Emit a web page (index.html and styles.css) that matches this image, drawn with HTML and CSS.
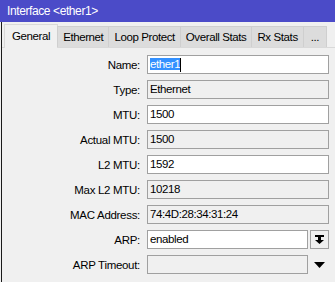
FILE: index.html
```html
<!DOCTYPE html>
<html lang="en">
<head>
    <meta charset="UTF-8">
    <title>Interface &lt;ether1&gt;</title>
    <link rel="stylesheet" href="styles.css">
</head>
<body>
    <div class="window">
        <div class="titlebar">Interface &lt;ether1&gt;</div>
        <div class="frame">
            <div class="tabs">
                <div class="tab active">General</div>
                <div class="tab">Ethernet</div>
                <div class="tab">Loop Protect</div>
                <div class="tab">Overall Stats</div>
                <div class="tab">Rx Stats</div>
                <div class="tab more">...</div>
            </div>
            <div class="panel">
                <div class="row">
                    <label>Name:</label>
                    <div class="field edit"><span class="sel">ether1</span><span class="caret"></span></div>
                </div>
                <div class="row">
                    <label>Type:</label>
                    <div class="field">Ethernet</div>
                </div>
                <div class="row">
                    <label>MTU:</label>
                    <div class="field edit">1500</div>
                </div>
                <div class="row">
                    <label>Actual MTU:</label>
                    <div class="field">1500</div>
                </div>
                <div class="row">
                    <label>L2 MTU:</label>
                    <div class="field edit">1592</div>
                </div>
                <div class="row">
                    <label>Max L2 MTU:</label>
                    <div class="field">10218</div>
                </div>
                <div class="row">
                    <label>MAC Address:</label>
                    <div class="field">74:4D:28:34:31:24</div>
                </div>
                <div class="row">
                    <label>ARP:</label>
                    <div class="combo">
                        <div class="field edit">enabled</div>
                        <div class="dropbtn">
                            <svg width="9" height="9" viewBox="0 0 9 9"><rect x="0" y="0" width="9" height="2" fill="#000"/><rect x="3" y="2" width="3" height="3" fill="#000"/><polygon points="0,5 9,5 4.5,9" fill="#000"/></svg>
                        </div>
                    </div>
                </div>
                <div class="row">
                    <label>ARP Timeout:</label>
                    <div class="combo">
                        <div class="field"></div>
                        <div class="droparrow">
                            <svg width="11" height="6" viewBox="0 0 11 6"><polygon points="0,0 11,0 5.5,6" fill="#000"/></svg>
                        </div>
                    </div>
                </div>
            </div>
        </div>
    </div>
</body>
</html>
```

FILE: styles.css
```css
body {
    margin: 0;
    font-family: "Liberation Sans", Arial, sans-serif;
    font-size: 11px;
    background: #ffffff;
}

.window {
    width: 335px;
    height: 282px;
    overflow: hidden;
    background: #f0f0f0;
}

.titlebar {
    height: 22px;
    line-height: 22px;
    padding-left: 7px;
    background: #4b4bc8;
    color: #ffffff;
    font-size: 12px;
    letter-spacing: -0.4px;
}

.frame {
    margin-left: 1px;
    border-left: 1px solid #1a1a1a;
    height: 260px;
    padding-top: 2px;
    box-sizing: border-box;
}

.tabs {
    display: flex;
    align-items: flex-end;
    height: 23px;
    padding-left: 2px;
    border-bottom: 1px solid #d9d9d9;
}

.tab {
    height: 20px;
    line-height: 20px;
    padding: 0 5px;
    background: #dcdcdc;
    border: 1px solid #cfcfcf;
    border-bottom: none;
    margin-right: -1px;
    font-size: 11.5px;
    letter-spacing: -0.4px;
    color: #000;
}

.tab.active {
    height: 23px;
    line-height: 22px;
    padding: 0 7px;
    background: #f0f0f0;
    border-color: #d9d9d9;
    margin-bottom: -1px;
}

.tab.more {
    padding: 0 7px;
}

.panel {
    padding: 7px 6px 0 0;
    display: flex;
    flex-direction: column;
    gap: 6px;
}

.row {
    display: flex;
    align-items: center;
    height: 19px;
}

.row label {
    width: 138px;
    text-align: right;
    padding-right: 7px;
    font-size: 11.5px;
    letter-spacing: -0.3px;
    color: #000;
}

.field {
    flex: 1;
    height: 19px;
    box-sizing: border-box;
    border: 1px solid #a0a0a0;
    background: #f0f0f0;
    padding-left: 2px;
    line-height: 17px;
    font-size: 11.5px;
    letter-spacing: -0.4px;
    color: #000;
}

.field.edit {
    background: #ffffff;
}

.sel {
    background: #3390ff;
    color: #ffffff;
}

.caret {
    display: inline-block;
    width: 1px;
    height: 14px;
    background: #000;
    vertical-align: middle;
}

.combo {
    flex: 1;
    display: flex;
    gap: 2px;
}

.dropbtn {
    width: 19px;
    height: 19px;
    box-sizing: border-box;
    border: 1px solid #a0a0a0;
    display: flex;
    align-items: center;
    justify-content: center;
}

.droparrow {
    width: 19px;
    height: 19px;
    display: flex;
    align-items: center;
    justify-content: center;
}
```
